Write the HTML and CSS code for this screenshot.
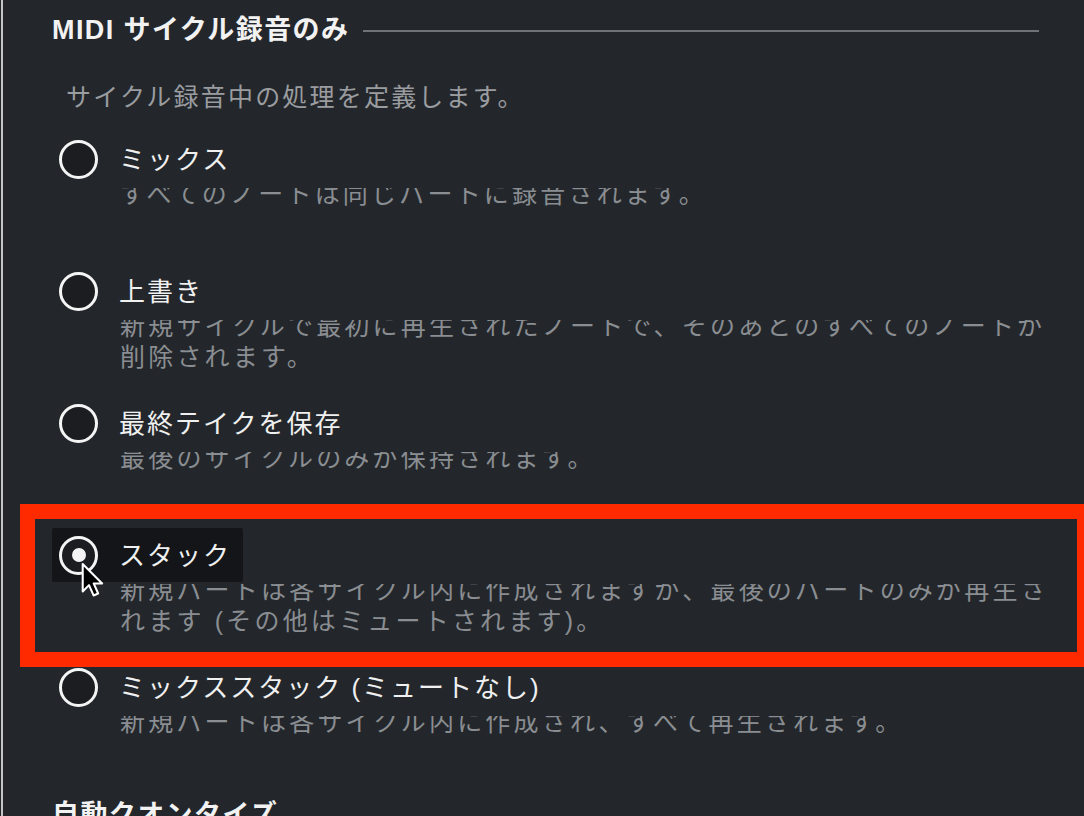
FILE: index.html
```html
<!DOCTYPE html>
<html lang="ja">

<head>
  <meta charset="UTF-8">
  <meta name="viewport" content="width=device-width, initial-scale=1.0">
  <title>MIDI サイクル録音</title>
  <link rel="stylesheet" href="styles.css">
</head>

<body>
  <div class="panel">
    <section class="group">
      <h2 class="group-title">MIDI サイクル録音のみ</h2>
      <p class="group-note">サイクル録音中の処理を定義します。</p>

      <ul class="options">
        <li class="option">
          <div class="option-head">
            <span class="option-label"><span class="radio"></span><span class="option-name">ミックス</span></span>
          </div>
          <p class="option-desc">すべてのノートは同じパートに録音されます。</p>
        </li>
        <li class="option">
          <div class="option-head">
            <span class="option-label"><span class="radio"></span><span class="option-name">上書き</span></span>
          </div>
          <p class="option-desc">新規サイクルで最初に再生されたノートで、そのあとのすべてのノートが削除されます。</p>
        </li>
        <li class="option">
          <div class="option-head">
            <span class="option-label"><span class="radio"></span><span class="option-name">最終テイクを保存</span></span>
          </div>
          <p class="option-desc">最後のサイクルのみが保持されます。</p>
        </li>
        <li class="option marked">
          <div class="option-head">
            <span class="option-label hover">
              <span class="radio checked"></span><span class="option-name">スタック</span>
              <!-- mouse pointer -->
              <svg class="pointer" width="24" height="36" viewBox="-1.5 -1.5 21 31">
                <path d="M0 0 L0 24 L5.5 18.5 L9.5 27.5 L13.5 25.8 L9.6 17 L17 17 Z" fill="#000" stroke="#fff" stroke-width="1.8" stroke-linejoin="round"/>
              </svg>
            </span>
          </div>
          <p class="option-desc">新規パートは各サイクル内に作成されますが、最後のパートのみが再生されます (その他はミュートされます)。</p>
        </li>
        <li class="option">
          <div class="option-head">
            <span class="option-label"><span class="radio"></span><span class="option-name">ミックススタック (ミュートなし)</span></span>
          </div>
          <p class="option-desc">新規パートは各サイクル内に作成され、すべて再生されます。</p>
        </li>
      </ul>
    </section>

    <h2 class="group-title next">自動クオンタイズ</h2>
  </div>
</body>

</html>
```

FILE: styles.css
```css
html,
body {
  margin: 0;
  height: 100%;
  overflow: hidden;
}

body {
  background-color: #23272b;
  font-family: "Liberation Sans", "Noto Sans CJK JP", sans-serif;
  color: #eeeeee;
}

.panel {
  min-height: 100%;
  margin-left: 1px;
  border-left: 2px solid #c2c4c6;
  padding: 12px 0 0 49px;
  box-sizing: border-box;
}

.group-title {
  display: flex;
  align-items: center;
  width: 987px;
  margin: 0;
  font-size: 27px;
  line-height: 36px;
  font-weight: bold;
  letter-spacing: 1.4px;
  color: #f2f2f2;
}

.group-title::after {
  content: "";
  flex: 1;
  height: 2px;
  margin-left: 14px;
  margin-top: 2px;
  background-color: #6f7276;
}

.group-title.next::after {
  display: none;
}

.group-title.next {
  margin-top: 7px;
}

.group-note {
  margin: 31px 0 0 14px;
  font-size: 25px;
  line-height: 36px;
  letter-spacing: 2.2px;
  color: #9a9ca0;
}

.options {
  list-style: none;
  width: 1010px;
  margin: 15px 0 0;
  padding: 0;
}

.option {
  position: relative;
  height: 132px;
}

.option-head {
  position: relative;
  z-index: 1;
  display: flex;
  align-items: center;
  height: 58px;
  background-color: #23272b;
}

.option-label {
  position: relative;
  display: inline-flex;
  align-items: center;
  height: 54px;
  padding: 0 12px 0 7px;
  border-radius: 2px;
}

.option-label.hover {
  background-color: #131518;
}

.radio {
  position: relative;
  width: 33px;
  height: 33px;
  border: 3px solid #f4f4f4;
  border-radius: 50%;
  background-color: #1b1d20;
  margin-right: 21px;
  flex-shrink: 0;
}

.radio.checked::after {
  content: "";
  position: absolute;
  left: 50%;
  top: 50%;
  width: 14px;
  height: 14px;
  margin: -7px 0 0 -7px;
  border-radius: 50%;
  background-color: #f4f4f4;
}

.option-name {
  font-size: 26px;
  letter-spacing: 2px;
  color: #f0f0f0;
  margin-top: -3px;
}

.pointer {
  position: absolute;
  left: 29px;
  top: 34px;
  z-index: 3;
}

.option-desc {
  margin: -9px 0 0;
  padding-left: 68px;
  font-size: 25px;
  line-height: 31px;
  letter-spacing: 3.2px;
  color: #8a8d91;
}

/* red annotation frame */
.option.marked {
  z-index: 2;
}

.option.marked::after {
  content: "";
  position: absolute;
  left: -32px;
  right: -30px;
  top: -22px;
  bottom: -9px;
  border: 15px solid #ff2a00;
  pointer-events: none;
}
```
